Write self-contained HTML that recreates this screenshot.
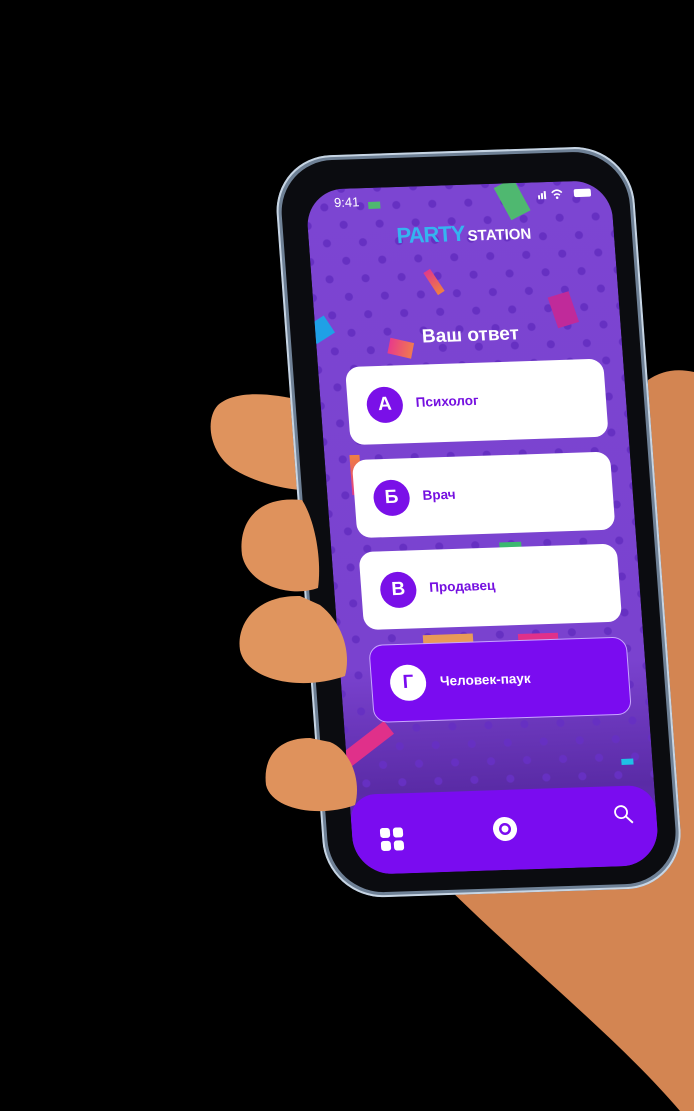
<!DOCTYPE html>
<html><head><meta charset="utf-8"><style>
*{margin:0;padding:0;box-sizing:border-box}
html,body{width:694px;height:1111px;background:#000;overflow:hidden;position:relative;font-family:"Liberation Sans",sans-serif}
.abs{position:absolute}
#phone{position:absolute;left:305px;top:190px;width:0;height:0;transform-origin:0 0;transform:matrix(1,-0.033,0.073,1,0,0)}
.body{position:absolute;left:-30px;top:-34px;width:358px;height:742px;border-radius:58px;background:#6f8196;box-shadow:inset 0 0 0 2px #c7d5e4}
.bez{position:absolute;left:-25px;top:-29px;width:348px;height:732px;border-radius:54px;background:#0b0c10}
.scr{position:absolute;left:0;top:0;width:305px;height:685px;border-radius:38px;overflow:hidden;
background:
radial-gradient(circle,#6630c2 3.6px,transparent 4.4px) 0 0/36px 36px,
radial-gradient(circle,#6630c2 3.6px,transparent 4.4px) 18px 18px/36px 36px,
linear-gradient(#7c45d2,#7a42cf 70%,#5a2ba6 88%,#6a33bd);}
.conf{position:absolute}
.card{position:absolute;left:27px;width:258px;height:78px;border-radius:14px;background:#fff}
.badge{position:absolute;left:19px;top:21px;width:36px;height:36px;border-radius:50%;background:#7a10e8;color:#fff;font-weight:bold;font-size:19px;text-align:center;line-height:36px}
.lbl{position:absolute;left:68px;top:30px;color:#7510e0;font-weight:bold;font-size:13.5px}
.nav{position:absolute;left:0;top:605px;width:305px;height:80px;background:#7a0cf0;border-radius:26px 26px 0 0}
</style></head><body>
<svg class="abs" style="left:0;top:0" width="694" height="1111">
<path d="M648 380 Q668 366 694 372 L694 1111 L680 1111 C620 1040 520 960 440 880 L640 860 Z" fill="#d38552"/>
<path d="M300 400 C270 393 235 390 218 405 C204 420 210 455 235 470 C255 482 280 488 300 490 Z" fill="#df935d"/>
</svg>
<div id="phone">
<div class="body"></div>
<div class="bez"></div>
<div class="scr">
<div class="conf" style="left:195px;top:-2px;width:22px;height:36px;background:#4fb870;transform:rotate(-25deg)"></div>
<div class="conf" style="left:62px;top:14px;width:12px;height:7px;background:#4fb870"></div>
<div class="conf" style="left:118px;top:83px;width:8px;height:26px;background:linear-gradient(#e03a8a,#f08040);transform:rotate(-30deg)"></div>
<div class="conf" style="left:238px;top:112px;width:22px;height:32px;background:#c02a9a;transform:rotate(-15deg)"></div>
<div class="conf" style="left:-6px;top:130px;width:22px;height:20px;background:#1fa0e6;transform:rotate(-30deg)"></div>
<div class="conf" style="left:72px;top:153px;width:24px;height:16px;background:linear-gradient(90deg,#e83a8a,#f07a50);transform:rotate(15deg)"></div>
<div class="conf" style="left:25px;top:266px;width:10px;height:40px;background:linear-gradient(#f08040,#e03a8a)"></div>
<div class="conf" style="left:168px;top:358px;width:22px;height:12px;background:#3cb870"></div>
<div class="conf" style="left:85px;top:448px;width:50px;height:24px;background:#e89a58"></div>
<div class="conf" style="left:180px;top:450px;width:40px;height:18px;background:#e0308a"></div>
<div class="conf" style="left:-10px;top:548px;width:60px;height:16px;background:#e0308a;transform:rotate(-35deg)"></div>
<div class="conf" style="left:274px;top:578px;width:12px;height:6px;background:#1fc0e6"></div>
<div style="position:absolute;left:28px;top:6px;color:#fff;font-size:13px">9:41</div>
<svg style="position:absolute;left:232px;top:6px" width="32" height="12"><rect x="0" y="7" width="2" height="4" fill="#fff"/><rect x="3" y="5" width="2" height="6" fill="#fff"/><rect x="6" y="3" width="2" height="8" fill="#fff"/><path d="M14 5 Q19 0 24 5 M16 7.5 Q19 5 22 7.5" stroke="#fff" stroke-width="1.6" fill="none"/><circle cx="19" cy="10" r="1.3" fill="#fff"/></svg>
<div style="position:absolute;left:268px;top:8px;width:17px;height:8px;background:#fff;border-radius:2px"></div>
<div style="position:absolute;left:88px;top:36px;font-weight:bold;font-size:22px;color:#35b4f0;letter-spacing:-1px">PARTY<span style="color:#fff;font-size:15px;letter-spacing:0;margin-left:3px">STATION</span></div>
<div style="position:absolute;left:106px;top:140px;color:#fff;font-weight:bold;font-size:19px">Ваш ответ</div>
<div class="card" style="top:178px"><div class="badge">А</div><div class="lbl">Психолог</div></div>
<div class="card" style="top:271px"><div class="badge">Б</div><div class="lbl">Врач</div></div>
<div class="card" style="top:363px"><div class="badge">В</div><div class="lbl">Продавец</div></div>
<div class="card" style="top:456px;left:30px;width:258px;background:#7a0cf0;border:1px solid #c9a6ff"><div class="badge" style="background:#fff;color:#7a0cf0;left:18px;top:20px">Г</div><div class="lbl" style="color:#fff">Человек-паук</div></div>
<div class="nav">
<svg style="position:absolute;left:28px;top:34px" width="24" height="24"><rect x="0" y="0" width="10" height="10" rx="3" fill="#fff"/><rect x="13" y="0" width="10" height="10" rx="3" fill="#fff"/><rect x="0" y="13" width="10" height="10" rx="3" fill="#fff"/><rect x="13" y="13" width="10" height="10" rx="3" fill="#fff"/></svg>
<svg style="position:absolute;left:140px;top:26px" width="26" height="26"><circle cx="13" cy="13" r="12" fill="#fff"/><circle cx="13" cy="13" r="6" fill="#7a0cf0"/><circle cx="13" cy="13" r="3.5" fill="#fff"/></svg>
<svg style="position:absolute;left:262px;top:18px" width="22" height="22"><circle cx="8" cy="8" r="6" fill="none" stroke="#fff" stroke-width="1.8"/><path d="M12.5 12.5 L19 19" stroke="#fff" stroke-width="2"/></svg>
</div>
</div>
</div>
<svg class="abs" style="left:0;top:0" width="694" height="1111">
<path d="M302 500 C255 495 238 525 242 555 C248 585 290 598 318 588 C322 560 315 520 302 500 Z" fill="#df925c"/>
<path d="M300 596 C255 595 236 625 240 650 C246 680 300 692 345 676 C352 650 340 620 320 605 Z" fill="#e0955e"/>
<path d="M310 738 C275 738 263 760 266 785 C272 810 320 818 355 805 C362 780 350 750 330 742 Z" fill="#df925c"/>
</svg>
</body></html>
